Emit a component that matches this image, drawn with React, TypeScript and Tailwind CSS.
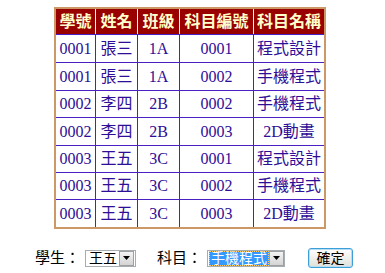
import React from 'react';

const rows = [
  ['0001', '張三', '1A', '0001', '程式設計'],
  ['0001', '張三', '1A', '0002', '手機程式'],
  ['0002', '李四', '2B', '0002', '手機程式'],
  ['0002', '李四', '2B', '0003', '2D動畫'],
  ['0003', '王五', '3C', '0001', '程式設計'],
  ['0003', '王五', '3C', '0002', '手機程式'],
  ['0003', '王五', '3C', '0003', '2D動畫'],
];

const heads = ['學號', '姓名', '班級', '科目編號', '科目名稱'];
const widths = ['w-[39px]', 'w-[41px]', 'w-[41px]', 'w-[73px]', 'w-[70px]'];
const rowHeights = ['h-[27px]', 'h-[27px]', 'h-[26px]', 'h-[27px]', 'h-[26px]', 'h-[26px]', 'h-[27px]'];

const serif = "font-['Liberation_Serif','Noto_Sans_CJK_TC',serif]";
const sans = "font-['Liberation_Sans','Noto_Sans_CJK_TC',sans-serif]";

const Arrow: React.FC = () => (
  <div className="shrink-0 w-[15px] h-[15px] border border-[#a0a0a0] bg-gradient-to-b from-[#f4f4f4] to-[#d4d4d4] flex items-center justify-center">
    <svg width="7" height="4" viewBox="0 0 7 4">
      <path d="M0 0h7L3.5 4z" fill="#000" />
    </svg>
  </div>
);

export default function App() {
  return (
    <div className="w-[385px] h-[273px] bg-white pt-[7px]">
      <div className={`ml-[54px] w-[272px] border-2 border-[#cc9966] ${serif} text-[16px]`}>
        <div className="flex h-[25px] bg-[#990000] text-[#ffffcc] font-bold">
          {heads.map((h, i) => (
            <div
              key={h}
              className={`${widths[i]} flex items-center justify-center ${i > 0 ? 'border-l border-[#ffffcc]' : ''} box-content`}
            >
              {h}
            </div>
          ))}
        </div>
        {rows.map((r, ri) => (
          <div key={ri} className={`flex ${rowHeights[ri]} border-t border-[#4a1fc4] box-content text-[#2e0e96]`}>
            {r.map((c, i) => (
              <div
                key={i}
                className={`${widths[i]} flex items-center justify-center ${i > 0 ? 'border-l border-[#4a1fc4]' : ''} box-content`}
              >
                {c}
              </div>
            ))}
          </div>
        ))}
      </div>

      <div className={`flex items-center mt-[18px] ml-[35px] text-[15px] text-black ${sans} whitespace-nowrap`}>
        <span>學生：</span>
        <div className="ml-[5px] w-[51px] h-[17px] border border-[#a5acb2] bg-white flex items-center justify-between pl-[3px] pr-px text-[14px] leading-none">
          <span>王五</span>
          <Arrow />
        </div>
        <span className="ml-[21px]">科目：</span>
        <div className="ml-[5px] w-[78px] h-[17px] border border-[#a5acb2] bg-white flex items-center justify-between px-px text-[14px] leading-none">
          <span className="h-[15px] w-[60px] shrink-0 bg-[#3399ff] text-white border border-dotted border-[#ffcc66] flex items-center justify-center whitespace-nowrap overflow-visible">
            手機程式
          </span>
          <Arrow />
        </div>
        <button className="ml-[23px] w-[45px] h-[20px] rounded-[3px] border border-[#3c9fd8] bg-gradient-to-b from-white to-[#e0e0da] text-[14px] leading-none flex items-center justify-center shadow-[inset_0_0_0_1px_#b8dcf2]">
          確定
        </button>
      </div>
    </div>
  );
}
